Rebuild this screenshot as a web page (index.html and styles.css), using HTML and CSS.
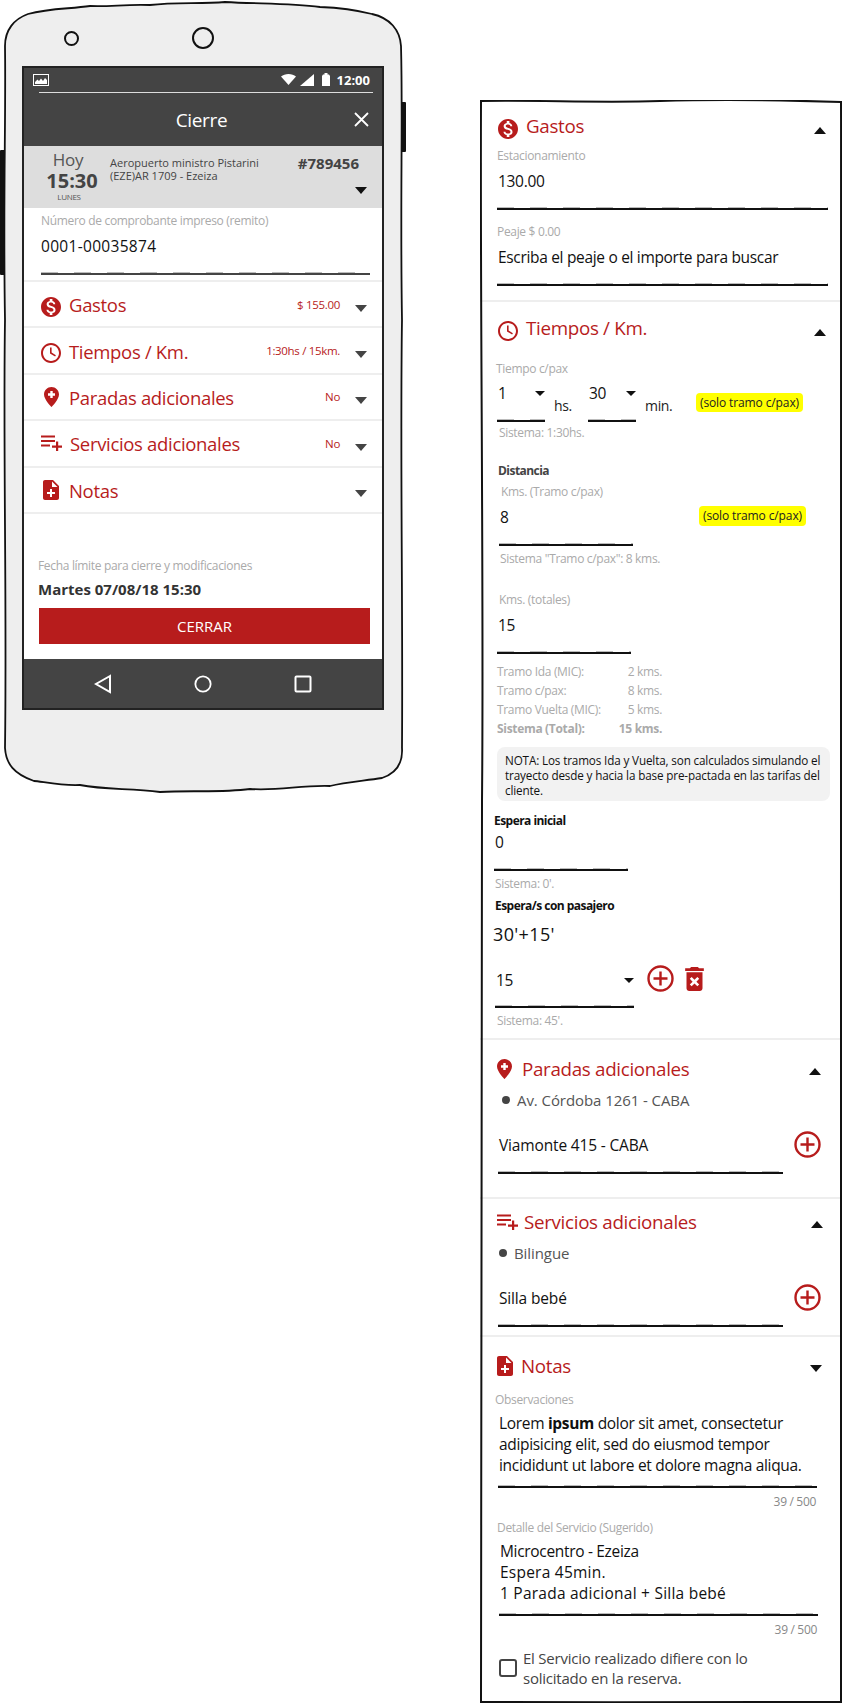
FILE: index.html
```html
<!DOCTYPE html>
<html lang="es">
<head>
<meta charset="utf-8">
<title>Cierre</title>
<link rel="stylesheet" href="styles.css">
</head>
<body>
<svg class="defs" width="0" height="0" aria-hidden="true">
  <symbol id="i-money" viewBox="2 2 20 20"><path d="M12 2C6.48 2 2 6.48 2 12s4.48 10 10 10 10-4.48 10-10S17.52 2 12 2zm1.41 16.09V20h-2.67v-1.93c-1.71-.36-3.16-1.46-3.27-3.4h1.96c.1 1.05.82 1.87 2.65 1.87 1.96 0 2.4-.98 2.4-1.59 0-.83-.44-1.61-2.67-2.14-2.48-.6-4.18-1.62-4.18-3.67 0-1.72 1.39-2.84 3.11-3.21V4h2.67v1.95c1.86.45 2.79 1.86 2.87 3.39H14.3c-.05-1.11-.64-1.87-2.22-1.87-1.5 0-2.4.68-2.4 1.64 0 .84.65 1.39 2.67 1.91s4.18 1.39 4.18 3.91c-.01 1.83-1.38 2.83-3.12 3.16z"/></symbol>
  <symbol id="i-clock" viewBox="2 2 20 20"><path d="M11.99 2C6.47 2 2 6.48 2 12s4.47 10 9.99 10C17.52 22 22 17.52 22 12S17.52 2 11.99 2zM12 20c-4.42 0-8-3.58-8-8s3.58-8 8-8 8 3.58 8 8-3.58 8-8 8z"/><path d="M11 6.500h1.600v5.100l4.300 2.600-.8 1.300-5.100-3.100z"/></symbol>
  <symbol id="i-pin" viewBox="0 0 15 20"><path d="M7.500 0C3.400 0 0 3.300 0 7.400 0 12.300 7.500 20 7.500 20S15 12.300 15 7.400C15 3.300 11.600 0 7.500 0zM11 8.700H8.700V11H6.300V8.700H4V6.300h2.300V4h2.400v2.300H11z"/></symbol>
  <symbol id="i-list" viewBox="0 0 21 15"><path d="M0 0h14v2H0zM0 4.500h14v2H0zM0 9h9v2H0zM15 6h2.200v4H21v2.200h-3.800V16H15v-3.800h-4V10h4z"/></symbol>
  <symbol id="i-note" viewBox="4 2 16 20"><path d="M14 2H6c-1.100 0-2 .9-2 2v16c0 1.100.9 2 2 2h12c1.100 0 2-.9 2-2V8l-6-6zm2 14h-3v3h-2v-3H8v-2h3v-3h2v3h3v2zm-3-7V3.500L18.500 9H13z"/></symbol>
  <symbol id="i-plus" viewBox="0 0 27 27"><circle cx="13.500" cy="13.500" r="12" fill="none" stroke="#b71c1c" stroke-width="2.400"/><path d="M12.300 6.500h2.400v5.800h5.800v2.400h-5.800v5.800h-2.400v-5.800H6.500v-2.400h5.800z"/></symbol>
  <symbol id="i-trash" viewBox="5 3 14 18"><path d="M6 19c0 1.100.9 2 2 2h8c1.100 0 2-.9 2-2V7H6v12zm2.460-7.120 1.410-1.410L12 12.590l2.120-2.120 1.410 1.410L13.410 14l2.120 2.120-1.410 1.410L12 15.410l-2.120 2.120-1.410-1.410L10.590 14l-2.130-2.120zM15.500 4l-1-1h-5l-1 1H5v2h14V4z"/></symbol>
</svg>

<main class="page">
  <div class="phone">
    <svg class="phone-body" viewBox="0 0 410 800" aria-hidden="true">
      <rect class="side-btn" x="0" y="150" width="5" height="125" rx="1"/>
      <rect class="side-btn" x="400" y="102" width="6" height="50" rx="1"/>
      <path class="phone-shell" d="M5 46C5 30 14 19 28 14 50 8 70 9 90 6 110 7 125 4 150 5 175 2 200 4 225 2 260 4 290 3 320 7 345 8 360 11 372 14 390 18 400 30 401 46 403 120 400 200 402 320 400 450 403 600 402 748 403 765 394 774 382 778 362 781 345 782 330 786 300 785 280 791 250 789 220 793 190 790 160 792 130 788 105 790 80 785 60 786 40 781 34 781 14 774 6 764 5 748 7 600 3 450 5 320 3 200 6 120 5 46z"/>
      <circle class="cam" cx="71.500" cy="38.500" r="6.500"/>
      <circle class="cam" cx="203" cy="38" r="10"/>
    </svg>
    <div class="screen">
      <header class="appbar">
        <div class="status">
          <svg class="st-img" viewBox="0 0 16 12" aria-hidden="true"><rect x="0.500" y="0.500" width="15" height="11" fill="none" stroke="#fff"/><path d="M2 10V8l2.500-2.500L6 7l2-2.500L10 7l2-3 2 2v4z" fill="#fff"/></svg>
          <svg class="st-wifi" viewBox="0 0 15 11" aria-hidden="true"><path d="M0 2.500C2 1 4.500 0 7.500 0S13 1 15 2.500L7.500 11z" fill="#fff"/></svg>
          <svg class="st-signal" viewBox="0 0 14 12" aria-hidden="true"><path d="M0 12 14 0v12z" fill="#fff"/></svg>
          <svg class="st-batt" viewBox="0 0 8 13" aria-hidden="true"><path d="M2.500 0h3v1.500H7L8 3v10H0V3l1-1.500h1.500z" fill="#fff"/></svg>
          <span class="st-time">12:00</span>
        </div>
        <div class="st-line"></div>
        <div class="titlebar">
          <h1 class="app-title">Cierre</h1>
          <svg class="close" viewBox="0 0 15 15" aria-hidden="true"><path d="M1 1l13 13M14 1 1 14" stroke="#fff" stroke-width="1.800"/></svg>
        </div>
      </header>

      <section class="trip">
        <div class="trip-when">
          <div class="trip-day">Hoy</div>
          <div class="trip-hour">15:30</div>
          <div class="trip-week">LUNES</div>
        </div>
        <div class="trip-addr">Aeropuerto ministro Pistarini<br>(EZE)AR 1709 - Ezeiza</div>
        <div class="trip-side">
          <div class="trip-num">#789456</div>
          <span class="arrow down dark"></span>
        </div>
      </section>

      <section class="receipt">
        <div class="label">Número de comprobante impreso (remito)</div>
        <div class="value">0001-00035874</div>
        <div class="rule rule-dark"></div>
      </section>

      <div class="row">
        <svg class="ic ic-20"><use href="#i-money"/></svg>
        <span class="row-title">Gastos</span>
        <span class="row-val">$ 155.00</span>
        <span class="arrow down grey"></span>
      </div>
      <div class="row">
        <svg class="ic ic-20"><use href="#i-clock"/></svg>
        <span class="row-title">Tiempos / Km.</span>
        <span class="row-val">1:30hs / 15km.</span>
        <span class="arrow down grey"></span>
      </div>
      <div class="row">
        <svg class="ic ic-pin"><use href="#i-pin"/></svg>
        <span class="row-title">Paradas adicionales</span>
        <span class="row-val">No</span>
        <span class="arrow down grey"></span>
      </div>
      <div class="row">
        <svg class="ic ic-list"><use href="#i-list"/></svg>
        <span class="row-title">Servicios adicionales</span>
        <span class="row-val">No</span>
        <span class="arrow down grey"></span>
      </div>
      <div class="row">
        <svg class="ic ic-note"><use href="#i-note"/></svg>
        <span class="row-title">Notas</span>
        <span class="arrow down grey"></span>
      </div>

      <footer class="deadline">
        <div class="label">Fecha límite para cierre y modificaciones</div>
        <div class="deadline-date">Martes 07/08/18 15:30</div>
        <div class="btn">CERRAR</div>
      </footer>

      <nav class="navbar">
        <svg class="nav-ic" viewBox="0 0 18 20" aria-hidden="true"><path d="M16 2 2 10l14 8z" fill="none" stroke="#fff" stroke-width="2"/></svg>
        <svg class="nav-ic" viewBox="0 0 20 20" aria-hidden="true"><circle cx="10" cy="10" r="8.500" fill="none" stroke="#fff" stroke-width="2"/></svg>
        <svg class="nav-ic" viewBox="0 0 18 18" aria-hidden="true"><rect x="1.500" y="1.500" width="15" height="15" rx="1" fill="none" stroke="#fff" stroke-width="2"/></svg>
      </nav>
    </div>
  </div>

  <div class="panel">
    <svg class="panel-edge" viewBox="0 0 362 1603" aria-hidden="true">
      <path d="M1 1C60 0 120 3 180 1S300 0 361 2C362 300 360 600 361 800S362 1300 361 1602C250 1601 120 1603 1 1602 2 1200 0 900 2 700S0 200 1 1z"/>
    </svg>

    <section class="sec sec-gastos">
      <div class="head">
        <svg class="ic ic-20"><use href="#i-money"/></svg>
        <span class="head-title title-up">Gastos</span>
        <span class="arrow up"></span>
      </div>
      <div class="field">
        <div class="label">Estacionamiento</div>
        <div class="value">130.00</div>
        <div class="rule"></div>
      </div>
      <div class="field field-gap">
        <div class="label">Peaje $ 0.00</div>
        <div class="value">Escriba el peaje o el importe para buscar</div>
        <div class="rule"></div>
      </div>
    </section>

    <section class="sec sec-tiempos">
      <div class="head">
        <svg class="ic ic-20"><use href="#i-clock"/></svg>
        <span class="head-title title-up">Tiempos / Km.</span>
        <span class="arrow up"></span>
      </div>
      <div class="label tp-label">Tiempo c/pax</div>
      <div class="tp-row">
        <div class="sel sel-sm">
          <div class="sel-line"><span class="value">1</span><span class="arrow down small"></span></div>
          <div class="rule"></div>
        </div>
        <span class="unit unit-hs">hs.</span>
        <div class="sel sel-sm">
          <div class="sel-line"><span class="value">30</span><span class="arrow down small"></span></div>
          <div class="rule"></div>
        </div>
        <span class="unit unit-min">min.</span>
        <span class="badge">(solo tramo c/pax)</span>
      </div>
      <div class="label sys-tp">Sistema: 1:30hs.</div>

      <div class="strong dist-title">Distancia</div>
      <div class="km-row">
        <div class="field km-one">
          <div class="label">Kms. (Tramo c/pax)</div>
          <div class="value">8</div>
          <div class="rule"></div>
        </div>
        <span class="badge badge-km">(solo tramo c/pax)</span>
      </div>
      <div class="label sys-km">Sistema "Tramo c/pax": 8 kms.</div>
      <div class="field km-two">
        <div class="label">Kms. (totales)</div>
        <div class="value">15</div>
        <div class="rule"></div>
      </div>

      <div class="legs">
        <div class="leg"><span>Tramo Ida (MIC):</span><span>2 kms.</span></div>
        <div class="leg"><span>Tramo c/pax:</span><span>8 kms.</span></div>
        <div class="leg"><span>Tramo Vuelta (MIC):</span><span>5 kms.</span></div>
        <div class="leg leg-total"><span>Sistema (Total):</span><span>15 kms.</span></div>
      </div>
      <div class="nota">NOTA: Los tramos Ida y Vuelta, son calculados simulando el<br>trayecto desde y hacia la base pre-pactada en las tarifas del<br>cliente.</div>

      <div class="strong wait-title">Espera inicial</div>
      <div class="field wait-field">
        <div class="value">0</div>
        <div class="rule"></div>
      </div>
      <div class="label sys-wait">Sistema: 0'.</div>
      <div class="strong wait2-title">Espera/s con pasajero</div>
      <div class="wait-sum">30'+15'</div>
      <div class="wait-row">
        <div class="sel sel-lg">
          <div class="sel-line"><span class="value">15</span><span class="arrow down small"></span></div>
          <div class="rule"></div>
        </div>
        <svg class="ic ic-plus wait-plus"><use href="#i-plus"/></svg>
        <svg class="ic ic-trash"><use href="#i-trash"/></svg>
      </div>
      <div class="label sys-45">Sistema: 45'.</div>
    </section>

    <section class="sec sec-paradas">
      <div class="head head-paradas">
        <svg class="ic ic-pin"><use href="#i-pin"/></svg>
        <span class="head-title title-paradas">Paradas adicionales</span>
        <span class="arrow up"></span>
      </div>
      <div class="bullet bullet-a"><i class="dot"></i>Av. Córdoba 1261 - CABA</div>
      <div class="add-row">
        <div class="add-field">
          <div class="value">Viamonte 415 - CABA</div>
          <div class="rule"></div>
        </div>
        <svg class="ic ic-plus"><use href="#i-plus"/></svg>
      </div>
    </section>

    <section class="sec sec-servicios">
      <div class="head head-servicios">
        <svg class="ic ic-list"><use href="#i-list"/></svg>
        <span class="head-title title-servicios">Servicios adicionales</span>
        <span class="arrow up"></span>
      </div>
      <div class="bullet bullet-b"><i class="dot"></i>Bilingue</div>
      <div class="add-row">
        <div class="add-field">
          <div class="value">Silla bebé</div>
          <div class="rule"></div>
        </div>
        <svg class="ic ic-plus"><use href="#i-plus"/></svg>
      </div>
    </section>

    <section class="sec sec-notas">
      <div class="head head-notas">
        <svg class="ic ic-note"><use href="#i-note"/></svg>
        <span class="head-title title-notas">Notas</span>
        <span class="arrow down"></span>
      </div>
      <div class="label obs-label">Observaciones</div>
      <div class="para">Lorem <b>ipsum</b> dolor sit amet, consectetur adipisicing elit, sed do eiusmod tempor incididunt ut labore et dolore magna aliqua.</div>
      <div class="rule para-rule"></div>
      <div class="counter">39 / 500</div>
      <div class="label det-label">Detalle del Servicio (Sugerido)</div>
      <div class="para para-b">Microcentro - Ezeiza<br><span class="wide">Espera 45min.</span><br><span class="wide">1 Parada adicional + Silla bebé</span></div>
      <div class="rule para-rule para-rule-b"></div>
      <div class="counter counter-b">39 / 500</div>
      <div class="check-row">
        <span class="check"></span>
        <span class="check-text">El Servicio realizado difiere con lo solicitado en la reserva.</span>
      </div>
    </section>
  </div>
</main>
</body>
</html>
```
FILE: styles.css
```css
* { box-sizing: border-box; }
html, body { margin: 0; padding: 0; background: #fff; }
body {
  font-family: "Open Sans", "Noto Sans", sans-serif;
  color: #111;
  letter-spacing: -0.02em;
}
.defs { position: absolute; }
.page { display: flex; align-items: flex-start; width: 843px; height: 1705px; overflow: hidden; }

/* shared bits */
.label { font-size: 12px; line-height: 16px; color: #aaa; white-space: nowrap; }
.value { font-size: 15.5px; line-height: 22px; color: #111; }
.strong { font-size: 12px; line-height: 16px; font-weight: 700; color: #111; letter-spacing: -0.045em; }
.rule { position: relative; height: 2px; background: #111; }
.rule::after {
  content: "";
  position: absolute;
  left: 0; right: 0; top: -1px;
  height: 1px;
  background: repeating-linear-gradient(90deg, #bbb 0 17px, transparent 17px 33px);
}
.rule-dark { background: #444; }
.ic { display: block; flex: none; fill: #b71c1c; }
.ic-20 { width: 20px; height: 20px; }
.ic-pin { width: 15px; height: 20px; }
.ic-list { width: 21px; height: 16px; }
.ic-note { width: 16px; height: 20px; }
.ic-plus { width: 27px; height: 27px; }
.ic-trash { width: 19px; height: 24px; }
.arrow { display: block; flex: none; width: 0; height: 0; border-left: 6.5px solid transparent; border-right: 6.5px solid transparent; }
.arrow.down { border-top: 7px solid #111; }
.arrow.up { border-bottom: 7px solid #111; }
.arrow.grey { border-top-color: #444; }
.arrow.small { border-left-width: 5px; border-right-width: 5px; border-top-width: 5px; }

/* phone */
.phone { position: relative; flex: none; width: 480px; height: 800px; padding: 66px 0 0 22px; }
.phone-body { position: absolute; left: 0; top: 0; width: 410px; height: 800px; }
.phone-shell { fill: #eee; stroke: #111; stroke-width: 1.800; }
.side-btn { fill: #111; }
.cam { fill: none; stroke: #111; stroke-width: 2; }
.screen { position: relative; width: 362px; height: 644px; background: #fff; border: 2px solid #222; display: flex; flex-direction: column; }

.appbar { height: 78px; background: #444; color: #fff; flex: none; }
.status { display: flex; align-items: center; height: 23px; padding: 0 12px 0 9px; }
.st-img { width: 16px; height: 12px; margin-right: auto; }
.st-wifi { width: 15px; height: 11px; }
.st-signal { width: 14px; height: 12px; margin-left: 4px; }
.st-batt { width: 8px; height: 13px; margin-left: 8px; }
.st-time { font-size: 13px; font-weight: 700; line-height: 18px; margin-left: 7px; letter-spacing: 0; }
.st-line { height: 1px; margin: 1px 9px 0 15px; background: #ddd; }
.titlebar { position: relative; height: 53px; display: flex; align-items: center; justify-content: center; }
.app-title { margin: 0 0 0 -3px; font-size: 19px; line-height: 24px; font-weight: 400; color: #fff; }
.close { position: absolute; right: 13px; top: 19px; width: 15px; height: 15px; }

.trip { display: flex; height: 62px; background: #ddd; flex: none; padding-left: 21px; color: #444; }
.trip-when { width: 54px; margin-right: 11px; text-align: center; }
.trip-day { font-size: 17px; line-height: 22px; margin-top: 3px; color: #555; margin-left: -8px; }
.trip-hour { font-size: 20px; line-height: 22px; font-weight: 700; margin-top: -1px; color: #444; letter-spacing: 0; white-space: nowrap; }
.trip-week { font-size: 8px; line-height: 10px; margin-top: 0; color: #555; margin-left: -6px; }
.trip-addr { font-size: 11px; line-height: 13px; width: 187px; margin-top: 10px; color: #444; letter-spacing: 0; }
.trip-side { display: flex; flex-direction: column; align-items: flex-end; width: 62px; }
.trip-num { font-size: 15px; line-height: 18px; font-weight: 700; margin-top: 8px; white-space: nowrap; color: #444; letter-spacing: 0; }
.trip-side .arrow { margin-top: 15px; margin-right: -8px; }

.receipt { flex: none; height: 74px; padding: 5px 12px 0 17px; border-bottom: 2px solid #eee; }
.receipt .value { margin-top: 6px; letter-spacing: 0.02em; }
.receipt .rule { margin-top: 16px; }

.row { flex: none; display: flex; align-items: center; height: 46.4px; padding: 0 15px 0 17px; border-bottom: 2px solid #eee; }
.row .ic { margin-top: 5px; }
.row-title { font-size: 18.5px; line-height: 26px; color: #b71c1c; margin: 2px 0 0 8px; white-space: nowrap; }
.row-val { margin-left: auto; font-size: 11.5px; color: #b71c1c; margin-right: 15px; }
.row .arrow { margin-top: 8px; }
.row .ic-pin { margin-left: 3px; margin-right: 2px; margin-top: 0; }
.row .ic-list { margin-top: 0; }
.row .ic-note { margin-left: 2px; margin-right: 2px; margin-top: 0; }
.row > .row-title + .arrow { margin-left: auto; }

.deadline { padding: 44px 12px 0 14px; flex: 1; }
.deadline-date { font-size: 15px; line-height: 20px; font-weight: 700; color: #333; margin-top: 5px; letter-spacing: 0; }
.btn { margin: 9px 0 0 1px; height: 36px; background: #b71c1c; color: #fff; font-size: 15px; line-height: 36px; text-align: center; letter-spacing: 0; }

.navbar { flex: none; height: 49px; background: #444; display: flex; align-items: center; padding-left: 70px; }
.nav-ic { display: block; flex: none; width: 18px; height: 20px; }
.nav-ic + .nav-ic { margin-left: 82px; }

/* panel */
.panel { position: relative; flex: none; width: 362px; height: 1603px; margin-top: 100px; }
.panel-edge { position: absolute; left: 0; top: 0; width: 362px; height: 1603px; z-index: 2; pointer-events: none; }
.panel-edge path { fill: none; stroke: #111; stroke-width: 2; }
.sec { border-bottom: 2px solid #eee; }
.sec:last-of-type { border-bottom: 0; }
.head { display: flex; align-items: center; height: 28px; padding-right: 16px; }
.head .ic { margin-right: 8px; }
.head .ic-20 { margin-top: 2px; }
.head-title { font-size: 18.8px; line-height: 28px; color: #b71c1c; white-space: nowrap; }
.title-up { margin-top: -5px; }
.head .arrow { margin-left: auto; margin-top: 4px; }

.sec-gastos { height: 202px; padding: 14px 14px 0 17px; }
.sec-gastos .head { padding-left: 1px; padding-right: 2px; margin-bottom: 6px; }
.field .value { margin-top: 6px; }
.field .rule { margin-top: 16px; }
.sec-gastos .value { padding-left: 1px; }
.field-gap { margin-top: 14px; }

.sec-tiempos { height: 738px; padding: 14px 12px 0 17px; }
.sec-tiempos .head { padding-left: 1px; padding-right: 4px; }
.tp-label { margin-top: 17px; margin-left: -1px; }
.tp-row { display: flex; align-items: flex-end; margin-top: 5px; height: 40px; }
.sel-line { display: flex; justify-content: space-between; align-items: center; height: 22px; padding-left: 1px; }
.sel-sm { width: 48px; }
.sel-sm .rule { margin-top: 16px; }
.sel-lg { width: 139px; }
.sel-lg .rule { margin-top: 15px; }
.unit { font-size: 14px; line-height: 22px; margin-bottom: 5px; color: #222; }
.unit-hs { width: 43px; padding-left: 9px; }
.unit-min { width: 60px; padding-left: 9px; }
.badge { align-self: flex-start; background: #ff0; border-radius: 4px; font-size: 12px; line-height: 19px; height: 19px; padding: 0 4px; margin-top: 11px; white-space: nowrap; color: #222; letter-spacing: -0.01em; }
.sys-tp { margin-top: 3px; margin-left: 2px; }
.dist-title { margin-top: 22px; margin-left: 1px; color: #444; }
.km-row { display: flex; margin-top: 5px; }
.km-one { width: 134px; margin-left: 2px; }
.km-one .label { padding-left: 2px; }
.km-one .value { padding-left: 1px; }
.badge-km { margin: 22px 0 0 66px; height: 20px; line-height: 20px; }
.sys-km { margin-top: 5px; margin-left: 3px; }
.km-two { width: 134px; margin-top: 25px; }
.km-two .label { padding-left: 2px; }
.km-two .value { padding-left: 1px; }
.legs { width: 165px; margin-top: 8px; }
.leg { display: flex; justify-content: space-between; font-size: 12px; line-height: 19px; color: #aaa; }
.leg-total { font-weight: 700; }
.nota { width: 333px; height: 54px; margin-top: 9px; padding: 6px 8px 3px 8px; background: #f2f2f2; border-radius: 8px; font-size: 11.7px; line-height: 15px; color: #111; letter-spacing: -0.012em; white-space: nowrap; }
.wait-title { margin: 12px 0 0 -3px; }
.wait-field { width: 134px; margin: 2px 0 0 -3px; }
.wait-field .value { margin-top: 0; padding-left: 1px; }
.sys-wait { margin: 5px 0 0 -2px; }
.wait2-title { margin: 6px 0 0 -2px; }
.wait-sum { margin: 7px 0 0 -4px; font-size: 18px; line-height: 26px; letter-spacing: 0.02em; }
.wait-row { display: flex; align-items: flex-start; margin: 22px 0 0 -2px; }
.wait-plus { margin: -4px 0 0 13px; }
.ic-trash { margin: -2px 0 0 11px; }
.sys-45 { margin-top: 5px; }

.sec-paradas { height: 159px; padding: 15px 19px 0 17px; }
.sec-paradas .head { padding-right: 2px; }
.title-paradas { margin-left: 2px; }
.bullet { display: flex; align-items: center; margin-top: 7px; height: 20px; font-size: 15px; color: #555; letter-spacing: -0.005em; }
.dot { display: block; flex: none; width: 8px; height: 8px; border-radius: 50%; background: #444; }
.bullet-a { padding-left: 5px; }
.bullet-a .dot { margin-right: 7px; }
.bullet-b { padding-left: 2px; }
.bullet-b .dot { margin-right: 7px; }
.add-row { display: flex; align-items: flex-start; margin-top: 24px; padding-left: 1px; }
.add-field { width: 285px; }
.add-field .value { padding-left: 1px; letter-spacing: -0.01em; }
.add-field .rule { margin-top: 16px; }
.add-row .ic-plus { margin: -3px 0 0 11px; }

.sec-servicios { height: 138px; padding: 9px 19px 0 17px; }
.sec-servicios .head { padding-right: 0; }
.title-servicios { margin-left: -2px; }

.sec-notas { height: 366px; padding: 15px 19px 0 15px; }
.head-notas { padding-left: 2px; padding-right: 1px; }
.title-notas { margin-left: 0; }
.obs-label { margin-top: 12px; }
.para { margin: 5px 0 0 4px; width: 320px; font-size: 15.5px; line-height: 21px; color: #111; }
.para b { font-weight: 700; }
.wide { letter-spacing: 0.015em; }
.para-rule { width: 319px; margin: 10px 0 0 3px; }
.counter { width: 321px; margin-top: 6px; font-size: 12px; line-height: 16px; text-align: right; color: #888; }
.det-label { margin: 10px 0 0 2px; }
.para-b { margin-left: 5px; }
.para-rule-b { margin-left: 4px; }
.counter-b { width: 322px; }
.check-row { display: flex; margin: 10px 0 0 4px; }
.check { flex: none; width: 18px; height: 18px; margin-top: 11px; border: 2px solid #444; border-radius: 3px; }
.check-text { width: 270px; margin-left: 6px; font-size: 15px; line-height: 20px; color: #444; letter-spacing: -0.015em; }
```
